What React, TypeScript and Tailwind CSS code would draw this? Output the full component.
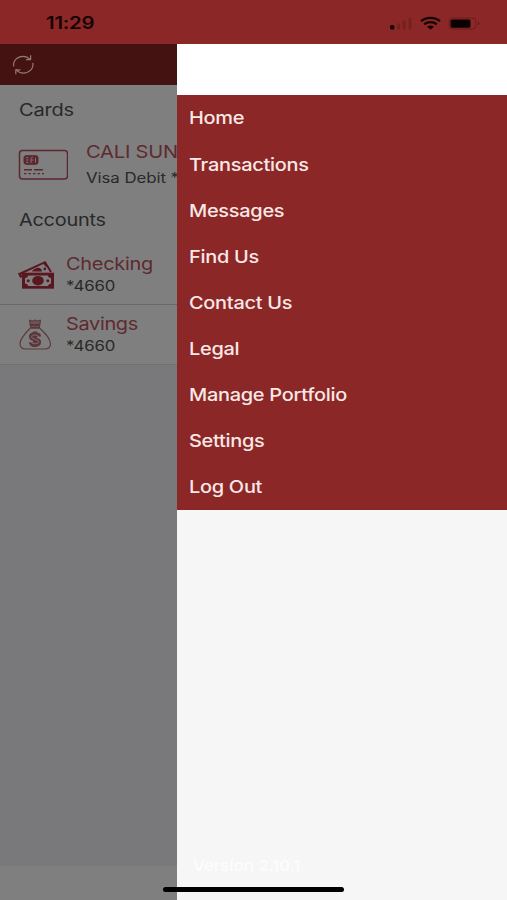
import clsx from "clsx";

const MENU_ITEMS = [
  "Home",
  "Transactions",
  "Messages",
  "Find Us",
  "Contact Us",
  "Legal",
  "Manage Portfolio",
  "Settings",
  "Log Out",
];

// Wide lettering used all over the app
const Wide = ({ children, className }: { children: string; className: string }) => (
  <span className={clsx("block w-max origin-left whitespace-nowrap", className)}>{children}</span>
);

const RefreshIcon = () => (
  <svg className="h-[22px] w-[24px]" viewBox="0 0 24 22" fill="none" stroke="#8f7a79" strokeWidth="1.2">
    <path d="M2.700 12.500C1.800 6.500 6.500 2.400 12 2.400c3.200 0 5.300 1.200 7.300 3.200" />
    <path d="M19.600 1.200v4.400h-4.600" />
    <path d="M21.800 8.800c1 6-3.800 10.300-9.300 10.300-3.200 0-5.400-1.200-7.400-3.300" />
    <path d="M4.800 20.300v-4.500h4.600" />
  </svg>
);

const StatusIcons = () => (
  <svg className="h-[16px] w-[92px]" viewBox="0 0 92 16" aria-label="Signal, wifi and battery">
    <rect x="1" y="9" width="4.400" height="4.500" rx="1.500" fill="#160303" />
    <g fill="#742121">
      <rect x="8" y="7.500" width="3.200" height="6" rx="1" />
      <rect x="13.500" y="4.500" width="3.200" height="9" rx="1" />
      <rect x="19.500" y="2" width="3.200" height="11.500" rx="1" />
    </g>
    <g fill="none" stroke="#160303" strokeWidth="2.200">
      <path d="M32 5.200C37 .7 46 .7 51 5.200" />
      <path d="M35.200 8.300c3.400-2.900 9.200-2.900 12.600 0" />
    </g>
    <path d="M38 10.800c2-1.600 5-1.600 7 0l-3.500 2.700z" fill="#160303" />
    <rect x="60" y="2" width="27" height="11" rx="3.200" fill="none" stroke="#6b1d1d" />
    <rect x="61.500" y="3.500" width="20" height="8.200" rx="1.600" fill="#0b0101" />
    <path d="M89 5.700c2 .6 2 3 0 3.600z" fill="#5f1a1a" />
  </svg>
);

const CardIcon = () => (
  <svg className="h-[32px] w-[50px] shrink-0" viewBox="0 0 50 32" fill="none" stroke="#5b2830">
    <rect x="1.500" y="1.500" width="48" height="28.500" rx="3" strokeWidth="1.500" />
    <rect x="6" y="6.700" width="14" height="8.600" rx="2" fill="#5b2830" />
    <path d="M8 8.700h2.500M8 11h2.500M8 13.300h2.500M13 14V9.500q0-1.500 2-1.500M13 11h2.500M17.500 8.700v5" stroke="#857676" strokeWidth=".9" />
    <path d="M6 20.800h8M16 20.800h9" strokeWidth="1.600" />
    <path d="M6 24.700h20" strokeWidth="1.200" strokeDasharray="2.500 2" />
  </svg>
);

const CashIcon = () => (
  <svg className="h-[30px] w-[38px] shrink-0" viewBox="0 0 38 30">
    {/* tilted note behind */}
    <path d="M2.500 14 28 2.200l6 9.800" fill="none" stroke="#5a1720" strokeWidth="2" />
    <path d="m.8 13 3 .2 1.700 4-2.500.500z" fill="#5a1720" />
    <path d="M25 3h4l2.500 4q-3.500 0-4-2z" fill="#5a1720" />
    <path d="M15 11.500q1-2.500 5.500-3.700 4-.3 4.500 3.700z" fill="#5a1720" />
    <circle cx="27.800" cy="9" r="1.400" fill="#5a1720" />
    {/* front note */}
    <rect x="5" y="12.700" width="32" height="16" fill="#5a1720" />
    <path d="M11 15.400h20q0 2 3 2.500v5.600q-3 .7-3 2.500H11q0-2-3-2.500v-5.600q3-.5 3-2.500z" fill="#7f7f7f" />
    <ellipse cx="21" cy="20.700" rx="5.800" ry="4.800" fill="#5a1720" />
    <circle cx="11.200" cy="20.700" r="1.500" fill="#5a1720" />
    <circle cx="30.800" cy="20.700" r="1.500" fill="#5a1720" />
  </svg>
);

const MoneyBagIcon = () => (
  <svg className="h-[32px] w-[34px] shrink-0" viewBox="0 0 34 32" fill="none" stroke="#5c363a">
    <path d="M12.500 8.500 11.500 1l2.800 1L17 1l2.700 1 2.800-1-1 7.500z" fill="#6a5557" strokeWidth="1" />
    <path d="M12 6h10M12 8.800h10" strokeWidth="1.800" />
    <path d="M12 9.500C8.500 13 2 19 2 25c0 4 2.500 5 6.500 5h17.500c4 0 6.500-1.500 6.500-5 0-6-6.500-12-10.500-15.500" strokeWidth="1.100" />
    <path d="M17 12.500v15.500" strokeWidth="4" />
    <path d="M21.300 17.500q0-2.500-4.300-2.500t-4.300 2.500 4.300 2.800 4.300 2.900-4.300 2.800-4.300-2.800" strokeWidth="3.600" />
    <path d="M20.700 17.500q-.5-1.500-3.700-1.500t-3.700 1.500 3.700 2.700 3.700 2.900-3.700 1.700-3.700-1.700" stroke="#7a6c6d" strokeWidth="1" />
  </svg>
);

export default function App() {
  return (
    <div className="relative flex h-[900px] w-[507px] flex-col overflow-hidden bg-[#f6f6f6] font-['Inter','Liberation_Sans',sans-serif]">
      {/* STATUS BAR */}
      <div className="flex h-[44px] shrink-0 items-center justify-between bg-[#8b2727] pl-[46px] pr-[26px] pt-[4px]">
        <Wide className="scale-x-[1.2] text-[17px] font-semibold tracking-[-0.200px] text-[#160303]">11:29</Wide>
        <StatusIcons />
      </div>

      <div className="flex flex-1">
        {/* DIMMED ACCOUNTS SCREEN */}
        <div className="flex w-[176.500px] shrink-0 flex-col overflow-hidden bg-[#79797b] text-[#292929]">
          <div className="flex h-[41px] shrink-0 items-center bg-[#451212] pl-[11px]">
            <RefreshIcon />
          </div>

          <div className="h-[280px] shrink-0 bg-[#7f7f7f]">
            <div className="flex h-[50px] items-center pl-[19px] pt-[2px]">
              <Wide className="scale-x-[1.18] text-[17px] tracking-[-0.200px]">Cards</Wide>
            </div>
            <div className="flex h-[59px] items-center pl-[18px]">
              <CardIcon />
              <div className="pl-[18px]">
                <Wide className="scale-x-[1.15] text-[17.500px] leading-[27px] tracking-[-0.200px] text-[#5e2a30]">CALI SUN</Wide>
                <Wide className="scale-x-[1.2] text-[14px] leading-[26px] tracking-[-0.050px]">Visa Debit *</Wide>
              </div>
            </div>
            <div className="flex h-[51px] items-center pl-[19px] pt-[2px]">
              <Wide className="scale-x-[1.17] text-[17px] tracking-[-0.200px]">Accounts</Wide>
            </div>
            <div className="flex h-[60px] items-center border-b border-[#6a6a6a] pl-[17px]">
              <CashIcon />
              <div className="pl-[11px]">
                <Wide className="scale-x-[1.14] text-[17.500px] leading-[22px] tracking-[-0.250px] text-[#5e2a30]">Checking</Wide>
                <Wide className="scale-x-[1.2] text-[14px] leading-[22px] tracking-[-0.100px]">*4660</Wide>
              </div>
            </div>
            <div className="flex h-[60px] items-center border-b border-[#707070] pl-[18px]">
              <MoneyBagIcon />
              <div className="pl-[14px]">
                <Wide className="scale-x-[1.14] text-[17.500px] leading-[22px] tracking-[-0.300px] text-[#5e2a30]">Savings</Wide>
                <Wide className="scale-x-[1.2] text-[14px] leading-[22px] tracking-[-0.100px]">*4660</Wide>
              </div>
            </div>
          </div>

          <div className="mt-auto h-[34px] bg-[#7f7f7f]" />
        </div>

        {/* SIDE MENU */}
        <div className="flex flex-1 flex-col">
          <div className="h-[51px] bg-white" />
          <nav className="h-[415px] bg-[#8b2727]">
            {MENU_ITEMS.map((label) => (
              <a key={label} className="flex h-[46.120px] items-center pl-[12px] pt-px text-[#f9e8e6]">
                <Wide className="scale-x-[1.14] text-[17.500px] font-[450] tracking-[-0.250px]">{label}</Wide>
              </a>
            ))}
          </nav>
          <div className="mt-auto h-[45px] pl-4">
            <Wide className="scale-x-[1.12] text-[15px] font-medium text-[#fdfdfd]">Version 2.10.1</Wide>
          </div>
        </div>
      </div>

      {/* HOME INDICATOR */}
      <div className="absolute bottom-[8px] left-[163px] h-[5px] w-[181px] rounded-full bg-black" />
    </div>
  );
}
